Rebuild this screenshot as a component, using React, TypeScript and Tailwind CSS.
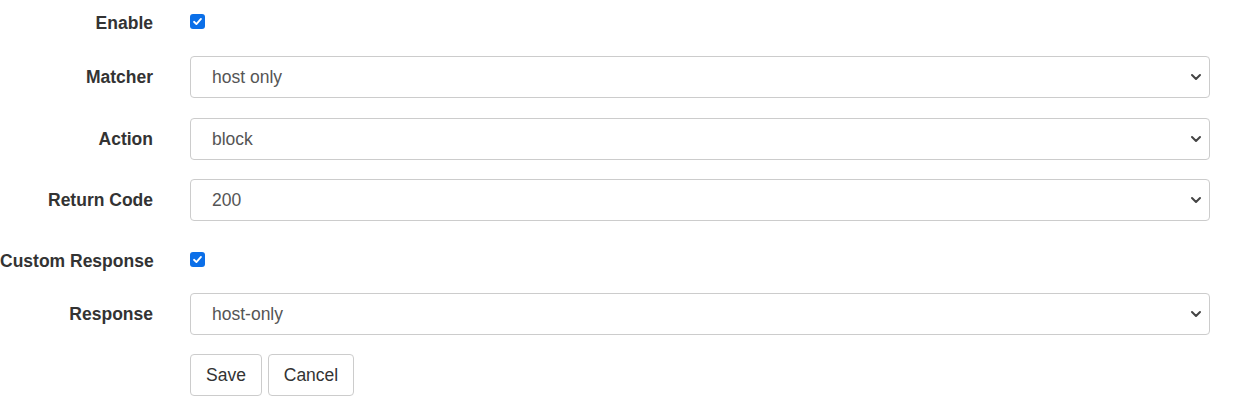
import React from "react";

const Label = ({ text, pad = "pt-[1px]" }: { text: string; pad?: string }) => (
    <div className={`w-[153px] shrink-0 whitespace-nowrap text-right text-[17.5px] font-bold text-[#333] ${pad}`}>{text}</div>
);

const Check = () => (
    <div className="ml-[37px] flex h-[15px] w-[15px] items-center justify-center rounded-[3px] bg-[#0b6fe8]">
        <svg width="11" height="11" viewBox="0 0 12 12" fill="none">
            <path d="M2.2 6.3 L4.8 8.8 L9.8 3.2" stroke="white" strokeWidth="2" strokeLinecap="round" strokeLinejoin="round" />
        </svg>
    </div>
);

const Select = ({ value }: { value: string }) => (
    <div className="ml-[37px] flex h-[42px] w-[1020px] items-center justify-between rounded-[4px] border border-[#ccc] bg-white pl-[21px] pr-[7px] text-[17.5px] text-[#555]">
        <span>{value}</span>
        <svg width="12" height="12" viewBox="0 0 12 12" fill="none">
            <path d="M2 4 L6 8 L10 4" stroke="#444" strokeWidth="2" strokeLinecap="round" strokeLinejoin="round" />
        </svg>
    </div>
);

export default function App() {
    return (
        <div className="flex h-[401px] w-[1247px] flex-col bg-white" style={{ fontFamily: '"Liberation Sans", Arial, sans-serif' }}>
            <div className="flex h-[43px] items-center">
                <Label text="Enable" pad="pt-[4px]" />
                <Check />
            </div>
            <div className="mt-[13px] flex items-center">
                <Label text="Matcher" />
                <Select value="host only" />
            </div>
            <div className="mt-[20px] flex items-center">
                <Label text="Action" />
                <Select value="block" />
            </div>
            <div className="mt-[19px] flex items-center">
                <Label text="Return Code" />
                <Select value="200" />
            </div>
            <div className="mt-[17px] flex h-[42px] items-center">
                <Label text="Custom Response" pad="pt-[4px]" />
                <Check />
            </div>
            <div className="mt-[13px] flex items-center">
                <Label text="Response" />
                <Select value="host-only" />
            </div>
            <div className="mt-[19px] flex items-center gap-[6px] pl-[190px]">
                <button className="h-[42px] w-[72px] rounded-[4px] border border-[#ccc] bg-white text-[17.5px] text-[#333]">Save</button>
                <button className="h-[42px] w-[86px] rounded-[4px] border border-[#ccc] bg-white text-[17.5px] text-[#333]">Cancel</button>
            </div>
        </div>
    );
}
